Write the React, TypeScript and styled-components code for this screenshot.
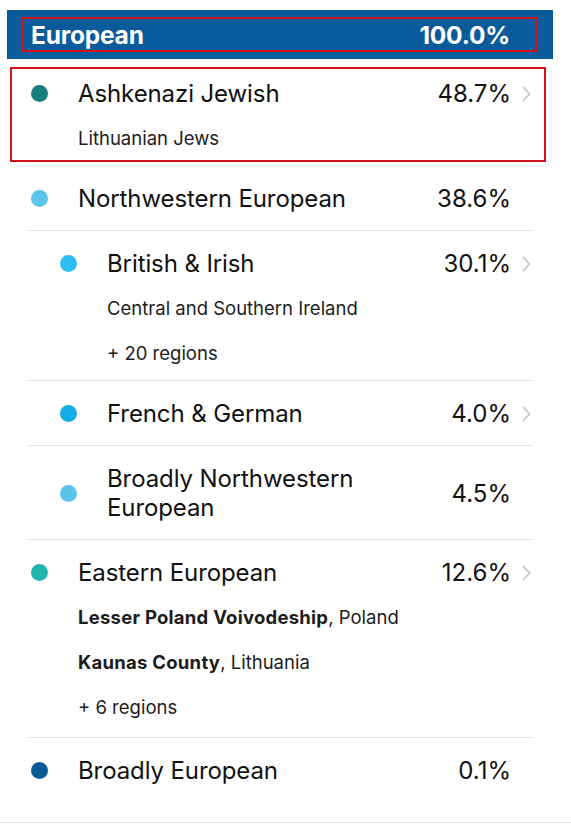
import React from 'react';
import styled, { createGlobalStyle } from 'styled-components';

const GlobalStyle = createGlobalStyle`
  html, body {
    margin: 0;
    padding: 0;
    background: #ffffff;
  }
  body {
    font-family: Inter, "Noto Sans", "Liberation Sans", sans-serif;
    color: #111111;
    -webkit-font-smoothing: antialiased;
  }
`;

const Page = styled.div`
  width: 571px;
  padding: 10px 0 20px;
  border-bottom: 1px solid #e2e2e2;
  box-sizing: border-box;
`;

const HeaderBar = styled.div`
  margin: 0 18px 0 7px;
  height: 49px;
  background: #0a5b9b;
  padding: 7px 16px 7px 14px;
  box-sizing: border-box;
`;

const Outline = styled.div`
  border: 2px solid #d3121c;
  height: 100%;
  box-sizing: border-box;
  display: flex;
  align-items: center;
  justify-content: space-between;
  padding: 0 25px 0 8px;
  color: #ffffff;
  font-weight: 700;
  font-size: 24.5px;
  letter-spacing: -0.2px;
`;

const Highlight = styled.div`
  margin: 8px 25px 0 10px;
  border: 2px solid #d3121c;
  padding: 10px 11px 9px 16px;
`;

const FaintRule = styled.div`
  margin: 3px 38px 0 28px;
  height: 1px;
  background: #f1f1f1;
`;

const List = styled.div`
  margin: 0 38px 0 28px;
`;

const Row = styled.div<{ $divider?: boolean; $bottom?: number }>`
  padding: 18px 0 ${({ $bottom }) => $bottom ?? 17}px;
  border-top: ${({ $divider }) => ($divider ? '1px solid #e4e4e4' : 'none')};
`;

const MainLine = styled.div<{ $indent: number }>`
  display: flex;
  align-items: center;
  padding-left: ${({ $indent }) => $indent}px;
`;

const Dot = styled.span<{ $color: string }>`
  flex: none;
  width: 17px;
  height: 17px;
  border-radius: 50%;
  background: ${({ $color }) => $color};
`;

const Name = styled.div`
  flex: 1;
  margin-left: 30px;
  font-size: 24px;
  line-height: 29px;
  letter-spacing: -0.1px;
  color: #111111;
`;

const Percent = styled.div`
  flex: none;
  width: 100px;
  text-align: right;
  font-size: 24px;
  line-height: 29px;
  color: #111111;
`;

const ChevronBox = styled.div`
  flex: none;
  width: 22px;
  display: flex;
  justify-content: flex-end;
  padding-right: 2px;
  box-sizing: border-box;
`;

const Subs = styled.div<{ $indent: number }>`
  display: flex;
  flex-direction: column;
  gap: 19px;
  margin-top: 17px;
  padding-left: ${({ $indent }) => $indent + 47}px;
`;

const Sub = styled.div`
  font-size: 18.5px;
  line-height: 26px;
  color: #1c1c1c;

  b {
    font-weight: 700;
    letter-spacing: 0.25px;
  }
`;

const Chevron = () => (
  <svg width="9" height="16" viewBox="0 0 9 16" fill="none">
    <path d="M1.5 1.5l6 6.5-6 6.5" stroke="#c6c6ca" strokeWidth="1.8" strokeLinecap="round" strokeLinejoin="round" />
  </svg>
);

interface Item {
  name: string;
  pct: string;
  color: string;
  nested?: boolean;
  chevron?: boolean;
  bottom?: number;
  subs?: React.ReactNode[];
}

const items: Item[] = [
  { name: 'Northwestern European', pct: '38.6%', color: '#5cc4ea' },
  {
    name: 'British & Irish',
    pct: '30.1%',
    color: '#2ec0f2',
    nested: true,
    chevron: true,
    bottom: 14,
    subs: ['Central and Southern Ireland', '+ 20 regions'],
  },
  { name: 'French & German', pct: '4.0%', color: '#14ace5', nested: true, chevron: true },
  { name: 'Broadly Northwestern European', pct: '4.5%', color: '#5cc4ea', nested: true },
  {
    name: 'Eastern European',
    pct: '12.6%',
    color: '#1fb4ae',
    chevron: true,
    subs: [
      <><b>Lesser Poland Voivodeship</b>, Poland</>,
      <><b>Kaunas County</b>, Lithuania</>,
      '+ 6 regions',
    ],
  },
  { name: 'Broadly European', pct: '0.1%', color: '#0b5a98' },
];

const Entry: React.FC<{ item: Item }> = ({ item }) => {
  const indent = item.nested ? 32 : 3;
  return (
    <>
      <MainLine $indent={indent}>
        <Dot $color={item.color} />
        <Name>{item.name}</Name>
        <Percent>{item.pct}</Percent>
        <ChevronBox>{item.chevron && <Chevron />}</ChevronBox>
      </MainLine>
      {item.subs && (
        <Subs $indent={indent}>
          {item.subs.map((s, i) => (
            <Sub key={i}>{s}</Sub>
          ))}
        </Subs>
      )}
    </>
  );
};

export default function App() {
  return (
    <>
      <GlobalStyle />
      <Page>
        <HeaderBar>
          <Outline>
            <span>European</span>
            <span>100.0%</span>
          </Outline>
        </HeaderBar>

        <Highlight>
          <Entry
            item={{
              name: 'Ashkenazi Jewish',
              pct: '48.7%',
              color: '#177e7b',
              chevron: true,
              subs: ['Lithuanian Jews'],
            }}
          />
        </Highlight>
        <FaintRule />

        <List>
          {items.map((item, i) => (
            <Row key={item.name} $divider={i > 0} $bottom={item.bottom}>
              <Entry item={item} />
            </Row>
          ))}
        </List>
      </Page>
    </>
  );
}
